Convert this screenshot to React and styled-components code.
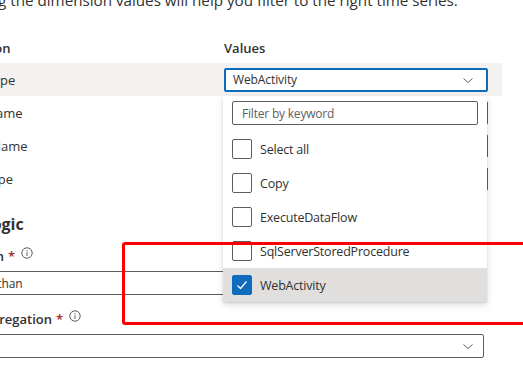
import React from 'react';
import styled, { createGlobalStyle } from 'styled-components';

const GlobalStyle = createGlobalStyle`
  html, body {
    margin: 0;
    padding: 0;
    background: #ffffff;
  }
  body {
    font-family: "Open Sans", "Segoe UI", sans-serif;
    color: #323130;
  }
`;

const dimensions = [
  { name: 'ActivityType', value: 'WebActivity', open: true },
  { name: 'ActivityName', value: '' },
  { name: 'PipelineName', value: '' },
  { name: 'FailureType', value: '' },
];

const options = [
  { label: 'Select all' },
  { label: 'Copy' },
  { label: 'ExecuteDataFlow' },
  { label: 'SqlServerStoredProcedure' },
  { label: 'WebActivity', checked: true },
];

const Chevron = () => (
  <svg width="12" height="12" viewBox="0 0 12 12">
    <path d="M1.5 4.5 L6 8.5 L10.5 4.5" fill="none" stroke="#605e5c" strokeWidth="1" />
  </svg>
);

const InfoIcon = () => (
  <svg width="12" height="12" viewBox="0 0 12 12">
    <circle cx="6" cy="6" r="5.2" fill="none" stroke="#605e5c" strokeWidth="1" />
    <circle cx="6" cy="3.6" r="0.7" fill="#605e5c" />
    <path d="M6 5.2 V9" stroke="#605e5c" strokeWidth="1" />
  </svg>
);

const Check = () => (
  <svg width="14" height="14" viewBox="0 0 14 14">
    <path d="M2.5 7.5 L5.5 10.5 L11.5 3.5" fill="none" stroke="#ffffff" strokeWidth="1.2" />
  </svg>
);

export default function App() {
  return (
    <>
      <GlobalStyle />
      <Viewport>
        <Page>
          <Intro>Selecting the dimension values will help you filter to the right time series.</Intro>
          <DimensionTable>
            <HeaderCell>Dimension</HeaderCell>
            <HeaderCell>Values</HeaderCell>
            <span />
            {dimensions.map((d, i) => (
              <Row key={d.name} $shaded={i === 0}>
                <LabelCell>{d.name}</LabelCell>
                <ValueCell>
                  <Select $focused={d.open}>
                    <SelectText>{d.value}</SelectText>
                    <Chevron />
                  </Select>
                  {d.open && (
                    <Popup>
                      <FilterInput>Filter by keyword</FilterInput>
                      <OptionList>
                        {options.map((o) => (
                          <OptionItem key={o.label} $selected={o.checked}>
                            <Box $checked={o.checked}>{o.checked && <Check />}</Box>
                            {o.label}
                          </OptionItem>
                        ))}
                      </OptionList>
                    </Popup>
                  )}
                </ValueCell>
                <span />
              </Row>
            ))}
          </DimensionTable>

          <SectionTitle>Alert logic</SectionTitle>
          <Field $top={10}>
            <FieldLabel>
              Condition<Required> *</Required>
              <InfoIcon />
            </FieldLabel>
            <FormSelect>
              <SelectText>Greater than</SelectText>
              <Chevron />
            </FormSelect>
          </Field>
          <Field $top={14}>
            <FieldLabel>
              Time aggregation<Required> *</Required>
              <InfoIcon />
            </FieldLabel>
            <FormSelect>
              <SelectText />
              <Chevron />
            </FormSelect>
          </Field>
        </Page>
        <Annotation />
      </Viewport>
    </>
  );
}

const Viewport = styled.div`
  position: relative;
  width: 523px;
  height: 372px;
  overflow: hidden;
`;

const Page = styled.div`
  margin-left: -57px;
  width: 559px;
`;

const Intro = styled.div`
  font-size: 15.2px;
  line-height: 20px;
  margin-top: -10px;
  white-space: nowrap;
`;

const DimensionTable = styled.div`
  margin-top: 22px;
  display: grid;
  grid-template-columns: 281px 264px 1fr;
`;

const HeaderCell = styled.div`
  height: 31px;
  display: flex;
  align-items: center;
  font-size: 13px;
  font-weight: 600;
`;

const Row = styled.div`
  grid-column: 1 / -1;
  display: grid;
  grid-template-columns: subgrid;
  height: 33px;
  align-items: center;
  background: ${(p) => (p.$shaded ? '#f3f2f1' : 'transparent')};
`;

const LabelCell = styled.div`
  font-size: 13px;
`;

const ValueCell = styled.div`
  position: relative;
  height: 100%;
  display: flex;
  align-items: center;
`;

const Select = styled.div`
  box-sizing: border-box;
  width: 264px;
  height: 24px;
  display: flex;
  align-items: center;
  padding: 0 12px 0 8px;
  border: ${(p) => (p.$focused ? '2px solid #0f6cbd' : '1px solid #605e5c')};
  padding-left: ${(p) => (p.$focused ? '7px' : '8px')};
  border-radius: 2px;
  background: #ffffff;
`;

const SelectText = styled.span`
  flex: 1;
  font-size: 12px;
  letter-spacing: -0.1px;
  color: #323130;
`;

const Popup = styled.div`
  position: absolute;
  top: 100%;
  left: -1px;
  width: 264px;
  box-sizing: border-box;
  padding-top: 5px;
  background: #ffffff;
  box-shadow: 0 3.2px 7.2px rgba(0, 0, 0, 0.13), 0 0.6px 1.8px rgba(0, 0, 0, 0.11);
  z-index: 2;
`;

const FilterInput = styled.div`
  box-sizing: border-box;
  margin: 0 9px 7px;
  height: 24px;
  border: 1px solid #605e5c;
  border-radius: 2px;
  padding-left: 9px;
  display: flex;
  align-items: center;
  font-size: 12px;
  letter-spacing: -0.2px;
  color: #605e5c;
`;

const OptionList = styled.div`
  display: flex;
  flex-direction: column;
`;

const OptionItem = styled.div`
  height: 34px;
  display: flex;
  align-items: center;
  gap: 8px;
  padding-left: 9px;
  font-size: 12.5px;
  letter-spacing: -0.2px;
  background: ${(p) => (p.$selected ? '#e1dfdd' : 'transparent')};
`;

const Box = styled.span`
  box-sizing: border-box;
  width: 20px;
  height: 20px;
  border-radius: 2px;
  border: 1px solid ${(p) => (p.$checked ? '#0f6cbd' : '#605e5c')};
  background: ${(p) => (p.$checked ? '#0f6cbd' : '#ffffff')};
  display: flex;
  align-items: center;
  justify-content: center;
`;

const SectionTitle = styled.div`
  margin-top: 17px;
  font-size: 16px;
  line-height: 24px;
  font-weight: 700;
`;

const Field = styled.div`
  margin-top: ${(p) => p.$top}px;
  display: flex;
  flex-direction: column;
  gap: 5px;
`;

const FieldLabel = styled.div`
  display: flex;
  align-items: center;
  gap: 4px;
  font-size: 13px;
  line-height: 20px;
  font-weight: 600;

  svg {
    margin-left: 2px;
    margin-top: -6px;
  }
`;

const Required = styled.span`
  color: #a4262c;
  font-weight: 600;
`;

const FormSelect = styled.div`
  box-sizing: border-box;
  width: 541px;
  height: 24px;
  display: flex;
  align-items: center;
  padding: 0 9px 0 8px;
  border: 1px solid #605e5c;
  border-radius: 2px;
`;

const Annotation = styled.div`
  position: absolute;
  left: 122px;
  top: 242px;
  width: 420px;
  height: 83px;
  box-sizing: border-box;
  border: 3px solid #ff0000;
  border-radius: 3px;
  z-index: 5;
  pointer-events: none;
`;
